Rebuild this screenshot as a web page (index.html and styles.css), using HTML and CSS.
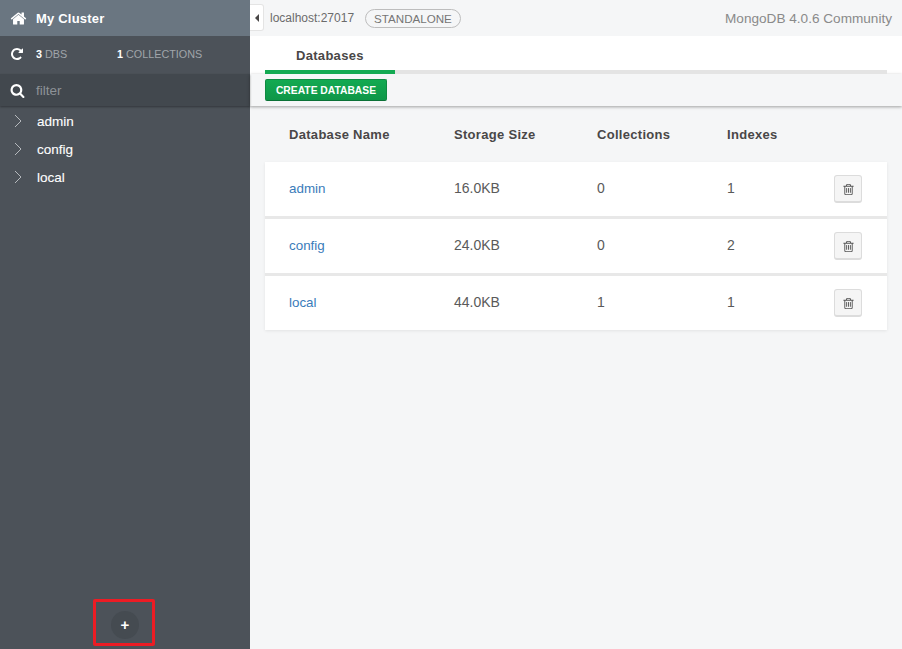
FILE: index.html
```html
<!DOCTYPE html>
<html lang="en">

<head>
    <meta charset="UTF-8">
    <meta name="viewport" content="width=device-width, initial-scale=1.0">
    <title>Compass</title>
    <link rel="stylesheet" href="styles.css">
</head>

<body>
    <svg class="sprite" xmlns="http://www.w3.org/2000/svg">
        <symbol id="trash" viewBox="0 0 1792 1792">
            <path d="M704 736v576q0 14-9 23t-23 9h-64q-14 0-23-9t-9-23v-576q0-14 9-23t23-9h64q14 0 23 9t9 23zm256 0v576q0 14-9 23t-23 9h-64q-14 0-23-9t-9-23v-576q0-14 9-23t23-9h64q14 0 23 9t9 23zm256 0v576q0 14-9 23t-23 9h-64q-14 0-23-9t-9-23v-576q0-14 9-23t23-9h64q14 0 23 9t9 23zm128 724v-948h-896v948q0 22 7 40.500t14.500 27 10.500 8.500h832q3 0 10.500-8.500t14.500-27 7-40.500zm-672-1076h448l-48-117q-7-9-17-11h-317q-10 2-17 11zm928 32v64q0 14-9 23t-23 9h-96v948q0 83-47 143.500t-113 60.500h-832q-66 0-113-58.500t-47-141.500v-952h-96q-14 0-23-9t-9-23v-64q0-14 9-23t23-9h309l70-167q15-37 54-63t79-26h320q40 0 79 26t54 63l70 167h309q14 0 23 9t9 23z"/>
        </symbol>
        <symbol id="chevron" viewBox="0 0 8 14">
            <path d="M1 1l6 6-6 6" fill="none" stroke="currentColor" stroke-width="1"/>
        </symbol>
    </svg>

    <div class="app">
        <aside class="sidebar">
            <div class="cluster">
                <svg class="side-icon home" viewBox="0 0 1792 1792"><path d="M1472 992v480q0 26-19 45t-45 19h-384v-384h-256v384h-384q-26 0-45-19t-19-45v-480q0-1 .5-3t.5-3l575-474 575 474q1 2 1 6zm223-69l-62 74q-8 9-21 11h-3q-13 0-21-7l-692-577-692 577q-12 8-24 7-13-2-21-11l-62-74q-8-10-7-23.500t11-21.500l719-599q32-26 76-26t76 26l244 204v-195q0-14 9-23t23-9h192q14 0 23 9t9 23v408l219 182q10 8 11 21.500t-7 23.500z"/></svg>
                <span>My Cluster</span>
            </div>
            <div class="stats">
                <svg class="side-icon refresh" viewBox="0 0 1792 1792"><path d="M1664 256v448q0 26-19 45t-45 19h-448q-42 0-59-40-17-39 14-69l138-138q-148-137-349-137-104 0-198.500 40.500t-163.500 109.500-109.500 163.500-40.500 198.500 40.500 198.500 109.500 163.500 163.500 109.500 198.500 40.500q119 0 225-52t179-147q7-10 23-12 15 0 25 9l137 138q9 8 9.500 20.500t-7.500 22.500q-109 132-264 204.500t-327 72.500q-156 0-298-61t-245-164-164-245-61-298 61-298 164-245 245-164 298-61q147 0 284.500 55.500t244.500 156.500l130-129q29-31 70-14 39 17 39 59z"/></svg>
                <span class="stat stat-dbs"><b>3</b> DBS</span>
                <span class="stat"><b>1</b> COLLECTIONS</span>
            </div>
            <div class="filter">
                <svg class="side-icon" viewBox="0 0 1792 1792"><path d="M1216 832q0-185-131.500-316.500t-316.500-131.500-316.500 131.500-131.500 316.500 131.500 316.500 316.500 131.500 316.500-131.500 131.500-316.500zm512 832q0 52-38 90t-90 38q-54 0-90-38l-343-342q-179 124-399 124-143 0-273.500-55.500t-225-150-150-225-55.500-273.500 55.500-273.500 150-225 225-150 273.500-55.500 273.500 55.500 225 150 150 225 55.500 273.500q0 220-124 399l343 343q37 37 37 90z"/></svg>
                <span>filter</span>
            </div>
            <ul class="db-list">
                <li><svg class="chevron"><use href="#chevron"/></svg>admin</li>
                <li><svg class="chevron"><use href="#chevron"/></svg>config</li>
                <li><svg class="chevron"><use href="#chevron"/></svg>local</li>
            </ul>
            <div class="side-foot">
                <div class="add-btn">+</div>
            </div>
            <div class="callout"></div>
        </aside>

        <main class="main">
            <div class="toggle"><i class="caret"></i></div>
            <div class="topbar">
                <span class="host">localhost:27017</span>
                <span class="pill">STANDALONE</span>
                <span class="version">MongoDB 4.0.6 Community</span>
            </div>
            <div class="tabs">
                <div class="tab">Databases</div>
            </div>
            <div class="controls">
                <button class="create-btn">CREATE DATABASE</button>
            </div>
            <div class="table">
                <div class="row head">
                    <div>Database Name</div>
                    <div>Storage Size</div>
                    <div>Collections</div>
                    <div>Indexes</div>
                </div>
                <div class="cards">
                    <div class="row card">
                        <a href="">admin</a>
                        <div>16.0KB</div>
                        <div>0</div>
                        <div>1</div>
                        <button class="del-btn"><svg><use href="#trash"/></svg></button>
                    </div>
                    <div class="row card">
                        <a href="">config</a>
                        <div>24.0KB</div>
                        <div>0</div>
                        <div>2</div>
                        <button class="del-btn"><svg><use href="#trash"/></svg></button>
                    </div>
                    <div class="row card">
                        <a href="">local</a>
                        <div>44.0KB</div>
                        <div>1</div>
                        <div>1</div>
                        <button class="del-btn"><svg><use href="#trash"/></svg></button>
                    </div>
                </div>
            </div>
        </main>
    </div>
</body>

</html>
```

FILE: styles.css
```css
* {
    margin: 0;
    padding: 0;
    box-sizing: border-box;
}

html,
body {
    height: 100%;
    overflow: hidden;
}

body {
    font-family: "Liberation Sans", Arial, sans-serif;
    font-size: 13px;
    color: #494747;
    background: #f5f6f7;
}

.sprite {
    display: none;
}

.app {
    display: flex;
    height: 649px;
}

/* sidebar */
.sidebar {
    position: relative;
    display: flex;
    flex-direction: column;
    width: 250px;
    flex: none;
    background: #4c5259;
    color: #fff;
}

.side-icon {
    width: 15px;
    height: 15px;
    fill: #fff;
    flex: none;
    margin: 0 11px 0 10px;
}

.side-icon.home {
    width: 17px;
    height: 17px;
    margin: 0 9px 0 10px;
}

.side-icon.refresh {
    width: 14px;
    height: 14px;
    margin: 0 12px 0 10px;
}

.cluster {
    display: flex;
    align-items: center;
    height: 36px;
    background: #6a7681;
    font-weight: bold;
    font-size: 13px;
    letter-spacing: .2px;
}

.stats {
    display: flex;
    align-items: center;
    height: 38px;
    padding-bottom: 2px;
    background: #4c5259;
    font-size: 10.800px;
    color: #a0a5aa;
}

.stat b {
    color: #fff;
}

.stat-dbs {
    width: 81px;
}

.filter {
    display: flex;
    align-items: center;
    height: 32px;
    background: #42484e;
    color: #8d9297;
    font-size: 13.500px;
    box-shadow: 0 1px 2px rgba(0, 0, 0, .35);
    position: relative;
}

.db-list {
    list-style: none;
    padding-top: 1px;
    font-size: 13.500px;
}

.db-list li {
    display: flex;
    align-items: center;
    height: 28px;
    padding-left: 14px;
    -webkit-text-stroke: .1px #fff;
}

.chevron {
    width: 8px;
    height: 14px;
    color: #b5b9bd;
    margin-right: 15px;
}

.side-foot {
    margin-top: auto;
    height: 49px;
    display: flex;
    justify-content: center;
    padding-top: 11px;
}

.add-btn {
    width: 28px;
    height: 28px;
    border-radius: 50%;
    background: #454b51;
    text-align: center;
    line-height: 28px;
    font-size: 15px;
    font-weight: bold;
}

.callout {
    position: absolute;
    left: 93px;
    top: 599px;
    width: 62px;
    height: 47px;
    border: 3px solid #ed1c24;
    border-radius: 2px;
}

/* main */
.main {
    position: relative;
    flex: 1;
    min-width: 0;
}

.toggle {
    position: absolute;
    left: 0;
    top: 4px;
    width: 14px;
    height: 27px;
    background: #fff;
    border: 1px solid #e4e4e4;
    border-left: 0;
    border-radius: 0 3px 3px 0;
    display: flex;
    align-items: center;
    justify-content: center;
}

.caret {
    border: 4px solid transparent;
    border-right: 4px solid #494747;
    border-left: 0;
}

.topbar {
    display: flex;
    align-items: center;
    height: 36px;
    padding: 0 10px 0 20px;
    font-size: 12px;
    color: #6b6b6b;
}

.pill {
    margin-left: 11px;
    height: 19px;
    line-height: 17px;
    padding: 0 8px;
    border: 1px solid #bdbdbd;
    border-radius: 10px;
    font-size: 11.600px;
    color: #757575;
}

.version {
    margin-left: auto;
    font-size: 13.600px;
    color: #8a8a8a;
}

.tabs {
    height: 38px;
    background: #fff;
    padding: 0 15px;
}

.tab {
    height: 38px;
    border-bottom: 4px solid #e4e4e4;
    color: #494747;
    font-weight: bold;
    letter-spacing: .3px;
    padding: 12px 0 0 31px;
    position: relative;
}

.tab::after {
    content: "";
    position: absolute;
    left: 0;
    bottom: -4px;
    width: 130px;
    height: 4px;
    background: #13aa52;
}

.controls {
    height: 32px;
    padding: 5px 15px 0;
    box-shadow: 0 1px 3px rgba(0, 0, 0, .35);
}

.create-btn {
    display: block;
    width: 122px;
    height: 22px;
    border: 1px solid #0f8a42;
    border-bottom-color: #0b7136;
    border-radius: 2px;
    background: linear-gradient(#13aa52, #0e9648);
    color: #fff;
    font: bold 10.300px "Liberation Sans", Arial, sans-serif;
}

.table {
    padding: 0 15px;
}

.row {
    display: grid;
    grid-template-columns: 165px 143px 130px 107px 28px;
    align-items: center;
    padding-left: 24px;
    width: 622px;
}

.head {
    height: 56px;
    font-weight: bold;
    letter-spacing: .3px;
}

.cards {
    display: flex;
    flex-direction: column;
    gap: 3px;
    background: #e8e8e8;
    box-shadow: 0 1px 3px rgba(0, 0, 0, .08);
}

.card {
    height: 54px;
    background: #fff;
    font-size: 14px;
    color: #5a5a5a;
}

.card > div,
.card > a {
    margin-bottom: 2px;
}

.card a {
    color: #3a7cba;
    font-size: 13.400px;
    text-decoration: none;
}

.del-btn {
    width: 28px;
    height: 28px;
    background: #f5f5f5;
    border: 1px solid #dcdcdc;
    border-bottom-width: 2px;
    border-radius: 3px;
    display: flex;
    align-items: center;
    justify-content: center;
    padding-top: 2px;
}

.del-btn svg {
    width: 13px;
    height: 13px;
    fill: #555;
}
```
